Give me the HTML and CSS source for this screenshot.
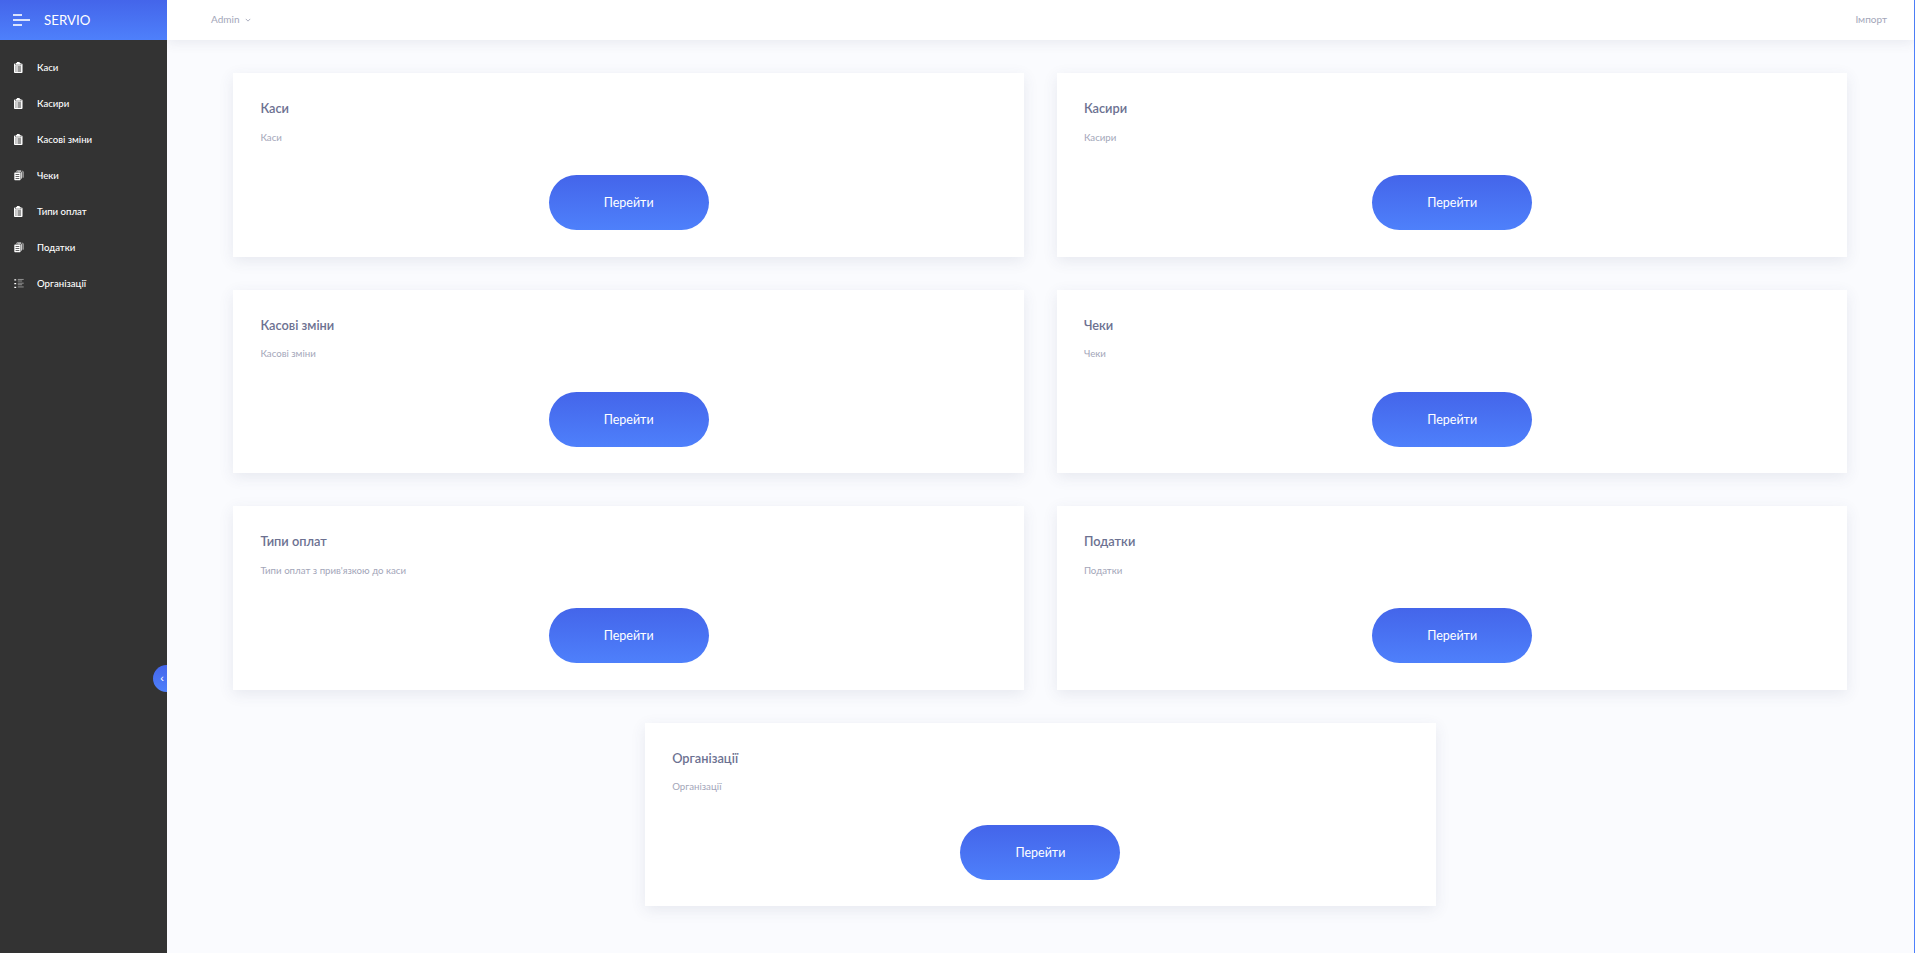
FILE: index.html
```html
<!DOCTYPE html>
<html lang="uk">
<head>
    <meta charset="UTF-8">
    <meta name="viewport" content="width=device-width, initial-scale=1.0">
    <title>SERVIO</title>
    <link rel="stylesheet" href="styles.css">
</head>
<body>

<svg class="icon-defs" width="0" height="0">
    <symbol id="iconClipboard" viewBox="0 0 12 15.500" preserveAspectRatio="xMinYMid meet">
        <path fill-rule="evenodd" d="M4 0h4v1.500h1.500v2.200h-7V1.500H4zM1.500 2h.3v2.500h8.400V2h.3c.8 0 1.500.6 1.500 1.400v10.600c0 .8-.7 1.500-1.500 1.500h-9C.7 15.500 0 14.800 0 14V3.400C0 2.600.7 2 1.500 2zM2 6.300v1.300h1.500V6.300zM5 6.300v1.300h5V6.300zM2 9.200v1.300h1.500V9.200zM5 9.200v1.300h5V9.200zM2 12.100v1.300h1.500v-1.300zM5 12.100v1.300h5v-1.300z" fill="currentColor"/>
    </symbol>
    <symbol id="iconCopy" viewBox="0 0 16 16" preserveAspectRatio="xMinYMid meet">
        <path fill-rule="evenodd" d="M1.500 3h8c.6 0 1 .4 1 1v10.500c0 .6-.4 1-1 1h-8c-.6 0-1-.4-1-1V4c0-.6.4-1 1-1zM2.500 6v1.300h6V6zM2.500 9v1.300h6V9zM2.500 12v1.300h6V12z" fill="currentColor"/>
        <path d="M4 1.700V1.500c0-.6.4-1 1-1h6.500M12 13V3c0-.6-.4-1-1-1H5.500M14.500 11.500V2c0-.6-.4-1-1-1" fill="none" stroke="currentColor" stroke-width="1.200"/>
    </symbol>
    <symbol id="iconList" viewBox="0 0 16 16" preserveAspectRatio="xMinYMid meet">
        <path d="M.5 1h3v2h-3zM.5 7h3v2h-3zM.5 13h3v2h-3z" fill="currentColor"/>
        <path d="M6 1.500h9.500M6 4h7M6 7.500h9.500M6 10h7M6 13.500h9.500" fill="none" stroke="currentColor" stroke-width="1" opacity=".75"/>
    </symbol>
</svg>

<div class="app">
    <!-- бокове меню -->
    <aside class="sidebar">
        <div class="brand">
            <span class="burger"><i></i><i></i><i></i></span>
            <span class="brand-name">SERVIO</span>
        </div>
        <nav class="menu">
            <a class="menu-item" href="#"><svg class="menu-icon"><use href="#iconClipboard"/></svg>Каси</a>
            <a class="menu-item" href="#"><svg class="menu-icon"><use href="#iconClipboard"/></svg>Касири</a>
            <a class="menu-item" href="#"><svg class="menu-icon"><use href="#iconClipboard"/></svg>Касові зміни</a>
            <a class="menu-item" href="#"><svg class="menu-icon"><use href="#iconCopy"/></svg>Чеки</a>
            <a class="menu-item" href="#"><svg class="menu-icon"><use href="#iconClipboard"/></svg>Типи оплат</a>
            <a class="menu-item" href="#"><svg class="menu-icon"><use href="#iconCopy"/></svg>Податки</a>
            <a class="menu-item" href="#"><svg class="menu-icon"><use href="#iconList"/></svg>Організації</a>
        </nav>
        <button class="collapse-btn">‹</button>
    </aside>

    <div class="main">
        <!-- верхня панель -->
        <header class="topbar">
            <span class="user">Admin<svg class="caret" viewBox="0 0 8 5"><path d="M1 1l3 3 3-3" fill="none" stroke="currentColor" stroke-width="1.200"/></svg></span>
            <a class="import-link" href="#">Імпорт</a>
        </header>

        <!-- картки розділів -->
        <section class="cards">
            <div class="card">
                <h3>Каси</h3>
                <p>Каси</p>
                <div class="card-action"><a class="go-btn" href="#">Перейти</a></div>
            </div>
            <div class="card">
                <h3>Касири</h3>
                <p>Касири</p>
                <div class="card-action"><a class="go-btn" href="#">Перейти</a></div>
            </div>
            <div class="card">
                <h3>Касові зміни</h3>
                <p>Касові зміни</p>
                <div class="card-action"><a class="go-btn" href="#">Перейти</a></div>
            </div>
            <div class="card">
                <h3>Чеки</h3>
                <p>Чеки</p>
                <div class="card-action"><a class="go-btn" href="#">Перейти</a></div>
            </div>
            <div class="card">
                <h3>Типи оплат</h3>
                <p>Типи оплат з прив'язкою до каси</p>
                <div class="card-action"><a class="go-btn" href="#">Перейти</a></div>
            </div>
            <div class="card">
                <h3>Податки</h3>
                <p>Податки</p>
                <div class="card-action"><a class="go-btn" href="#">Перейти</a></div>
            </div>
            <div class="card">
                <h3>Організації</h3>
                <p>Організації</p>
                <div class="card-action"><a class="go-btn" href="#">Перейти</a></div>
            </div>
        </section>
    </div>
</div>

</body>
</html>
```

FILE: styles.css
```css
* {
    box-sizing: border-box;
}
body {
    font-family: Lato, "Noto Sans", sans-serif;
    background-color: #fafbfe;
    margin: 0;
    height: 953px;
    overflow: hidden;
}
a {
    text-decoration: none;
}
.icon-defs {
    position: absolute;
}
.app {
    display: flex;
    height: 100%;
}
.sidebar {
    position: relative;
    width: 167px;
    flex-shrink: 0;
    background-color: #333333;
}
.brand {
    display: flex;
    align-items: center;
    height: 40px;
    padding-left: 13px;
    background: linear-gradient(180deg, #4465ea, #4e80fb);
}
.burger {
    display: flex;
    flex-direction: column;
    gap: 3px;
    width: 17px;
    margin-right: 14px;
}
.burger i {
    display: block;
    height: 2px;
    background-color: rgba(255, 255, 255, 0.8);
    width: 9px;
}
.burger i:nth-child(2) {
    width: 17px;
}
.brand-name {
    color: white;
    font-size: 13.300px;
}
.menu {
    padding-top: 9.500px;
}
.menu-item {
    display: flex;
    align-items: center;
    height: 36px;
    padding-left: 14px;
    color: white;
    font-size: 9.600px;
    font-weight: 500;
}
.menu-icon {
    width: 10px;
    height: 11px;
    margin-right: 13px;
    flex-shrink: 0;
}
.collapse-btn {
    position: absolute;
    left: 153px;
    top: 665px;
    width: 14px;
    height: 27px;
    padding: 0 0 0 4px;
    border: none;
    border-radius: 14px 0 0 14px;
    background: linear-gradient(180deg, #4465ea, #4e80fb);
    color: white;
    font-size: 11px;
    line-height: 25px;
    text-align: center;
}
.main {
    flex: 1;
    min-width: 0;
    border-right: 1px solid #4e80fb;
}
.topbar {
    display: flex;
    justify-content: space-between;
    align-items: center;
    height: 40px;
    padding: 0 27px 2px 44px;
    background-color: white;
    box-shadow: 0 2px 12px rgba(60, 70, 110, 0.1);
    color: #a3a6b9;
    font-size: 10px;
}
.caret {
    width: 6px;
    height: 4px;
    margin-left: 6px;
    vertical-align: middle;
}
.import-link {
    color: #a3a6b9;
}
.cards {
    display: flex;
    flex-wrap: wrap;
    justify-content: center;
    gap: 33px;
    padding: 33px 66.600px 0 66.400px;
}
.card {
    width: 790.500px;
    height: 183.600px;
    padding: 26px 27px 0;
    background-color: white;
    box-shadow: 0 4px 14px rgba(60, 70, 110, 0.1);
}
.card h3 {
    margin: 0;
    color: #6c7191;
    font-size: 12.800px;
    font-weight: 600;
    line-height: 18px;
}
.card p {
    margin: 13.500px 0 0;
    color: #a3a6b9;
    font-size: 9.700px;
    line-height: 13px;
}
.card-action {
    display: flex;
    justify-content: center;
    margin-top: 31.500px;
}
.go-btn {
    display: flex;
    justify-content: center;
    align-items: center;
    width: 160px;
    height: 55px;
    border-radius: 28px;
    background: linear-gradient(180deg, #4465ea, #4e80fb);
    color: white;
    font-size: 12.500px;
}
```
